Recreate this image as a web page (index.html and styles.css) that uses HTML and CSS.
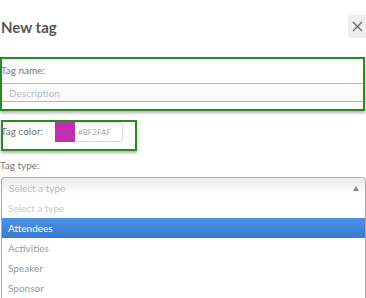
FILE: index.html
```html
<!DOCTYPE html>
<html>

<head>
  <title>New tag</title>
  <link rel="stylesheet" href="styles.css">
</head>

<body>
  <div class="modal">
    <div class="modal-header">
      <span class="modal-title">New tag</span>
      <button class="close-button">
        <svg width="11" height="11" viewBox="0 0 11 11">
          <path d="M1 1L10 10M10 1L1 10" stroke="#666" stroke-width="1.2" fill="none" />
        </svg>
      </button>
    </div>

    <div class="mark mark-name">
      <label class="field-label">Tag name:</label>
      <input type="text" class="text-input" placeholder="Description">
    </div>

    <div class="mark mark-color">
      <label class="field-label">Tag color:</label>
      <div class="color-picker">
        <span class="swatch"></span>
        <span class="color-code">#BF2FAF</span>
      </div>
    </div>

    <div class="type-row">
      <label class="field-label">Tag type:</label>
    </div>

    <div class="select-box">
      <div class="select-head">
        <span>Select a type</span>
        <span class="arrow"></span>
      </div>
      <ul class="select-list">
        <li class="disabled">Select a type</li>
        <li class="active">Attendees</li>
        <li>Activities</li>
        <li>Speaker</li>
        <li>Sponsor</li>
      </ul>
    </div>
  </div>
</body>

</html>
```

FILE: styles.css
```css
body,
html {
  margin: 0;
  height: 100%;
  background-color: #fff;
  overflow: hidden;
}

.modal {
  font-family: Lato, "Open Sans", sans-serif;
  width: 366px;
}

/* header */
.modal-header {
  display: flex;
  align-items: center;
  justify-content: space-between;
  height: 52px;
  padding-top: 1px;
  box-sizing: border-box;
}

.modal-title {
  font-size: 15px;
  font-weight: bold;
  color: #555;
  padding-left: 1px;
}

.close-button {
  width: 24px;
  height: 23px;
  margin-right: -6px;
  padding: 0 0 0 4px;
  border: none;
  border-radius: 4px;
  background-color: #eee;
  display: flex;
  align-items: center;
}

/* green annotation boxes */
.mark {
  border: 2px solid #278a25;
  box-shadow: 0 2px 3px rgba(0, 0, 0, 0.3);
  box-sizing: border-box;
}

.field-label {
  display: block;
  font-size: 10px;
  line-height: 14px;
  color: #777;
}

.mark-name {
  margin-top: 5px;
  width: 365px;
  height: 54px;
  padding-top: 4px;
}

.mark-name .field-label {
  margin-left: -1px;
}

.text-input {
  display: block;
  width: 100%;
  height: 19px;
  margin-top: 6px;
  padding: 0 7px;
  box-sizing: border-box;
  border: none;
  border-top: 1px solid #b3b8ba;
  border-bottom: 1px solid #b3b8ba;
  background-color: #fbfbfb;
  font-family: Lato, sans-serif;
  font-size: 10px;
}

.text-input::placeholder {
  color: #bbb;
}

.mark-color {
  margin: 9px 0 0 1px;
  width: 136px;
  height: 31px;
  display: flex;
  align-items: flex-start;
}

.mark-color .field-label {
  width: 54px;
  margin: 2px 0 0 -2px;
}

.color-picker {
  display: flex;
  height: 20px;
}

.swatch {
  width: 20px;
  background-color: #bf2faf;
}

.color-code {
  width: 48px;
  box-sizing: border-box;
  border: 1px solid #ddd;
  border-left: none;
  border-radius: 0 3px 3px 0;
  padding-left: 3px;
  font-size: 8px;
  line-height: 18px;
  color: #aaa;
}

.type-row {
  margin-top: 7px;
  height: 19px;
}

/* chosen style select */
.select-box {
  margin-left: 1px;
  width: 363px;
  border: 1px solid #aaa;
  border-bottom: none;
  border-radius: 4px 4px 0 0;
  font-size: 10px;
}

.select-head {
  display: flex;
  justify-content: space-between;
  align-items: center;
  height: 20px;
  padding: 0 6px 0 7px;
  color: #bbb;
  background-image: linear-gradient(#eee 20%, #fff 80%);
  border-radius: 4px 4px 0 0;
}

.arrow {
  width: 0;
  height: 0;
  border-left: 3px solid transparent;
  border-right: 3px solid transparent;
  border-bottom: 5px solid #888;
}

.select-list {
  list-style-type: none;
  margin: 0;
  padding: 0;
}

.select-list li {
  height: 20px;
  line-height: 20px;
  padding-left: 6px;
  color: #999;
}

.select-list li.disabled {
  color: #ccc;
}

.select-list li.active {
  color: #fff;
  background-image: linear-gradient(#4a91e3, #3a7bd2);
}
```
